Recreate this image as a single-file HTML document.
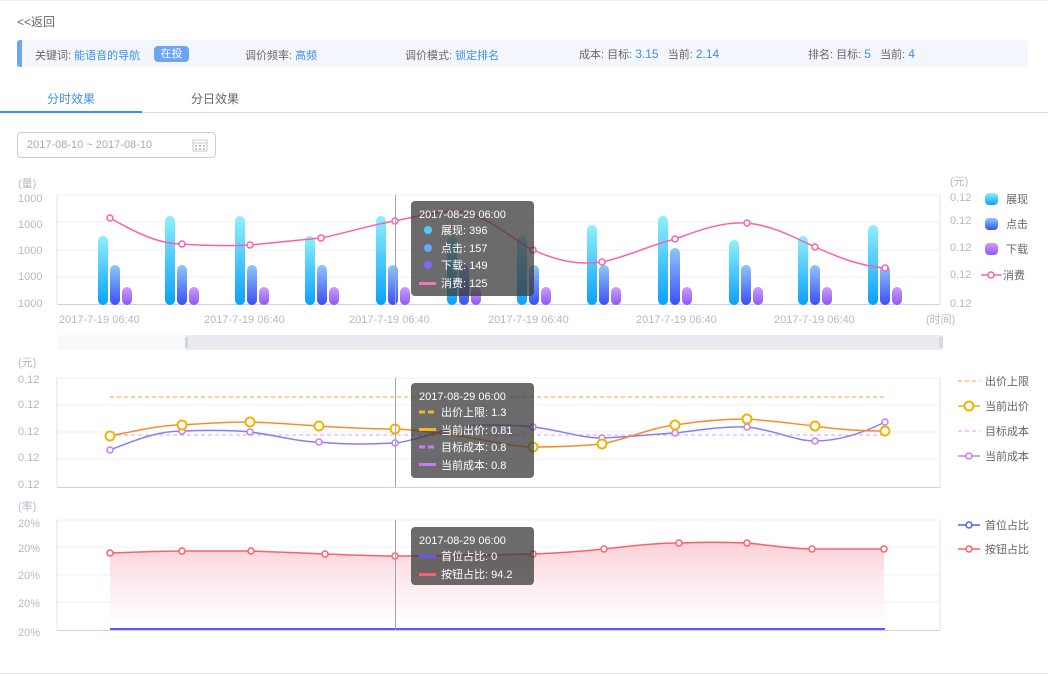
<!DOCTYPE html>
<html><head><meta charset="utf-8"><style>
*{margin:0;padding:0;box-sizing:border-box}
body{width:1048px;height:675px;background:#fff;font-family:"Liberation Sans","Noto Sans CJK SC",sans-serif;overflow:hidden;position:relative}
.a{position:absolute;white-space:pre}
.v{color:#3d8ef5;font-size:12px}
</style></head><body>
<div class="a" style="left:0;top:0;width:1048px;height:1px;background:#eceef3"></div>
<div class="a" style="left:17px;top:13px;font-size:12px;color:#666">&lt;&lt;返回</div>
<div class="a" style="left:17px;top:40px;width:1011px;height:27px;background:#f3f7fd;border-radius:3px;border-left:5px solid #6aa6f5"></div>
<div class="a" style="left:35px;top:47px;font-size:11px;color:#666">关键词: <span style="color:#3d8ef5">能语音的导航</span></div>
<div class="a" style="left:154px;top:46px;width:35px;height:16px;background:#6aa6f5;border-radius:4px;color:#fff;font-size:11px;text-align:center;line-height:16px">在投</div>
<div class="a" style="left:245px;top:47px;font-size:11px;color:#666">调价频率: <span style="color:#3d8ef5">高频</span></div>
<div class="a" style="left:405px;top:47px;font-size:11px;color:#666">调价模式: <span style="color:#3d8ef5">锁定排名</span></div>
<div class="a" style="left:579px;top:46px;font-size:11px;color:#666">成本: 目标: <span class="v">3.15</span>   当前: <span class="v">2.14</span></div>
<div class="a" style="left:808px;top:46px;font-size:11px;color:#666">排名: 目标: <span class="v">5</span>   当前: <span class="v">4</span></div>
<div class="a" style="left:47px;top:90px;font-size:12px;color:#3d8ef5">分时效果</div>
<div class="a" style="left:191px;top:90px;font-size:12px;color:#666">分日效果</div>
<div class="a" style="left:0;top:112px;width:1048px;height:1px;background:#d8dde8"></div>
<div class="a" style="left:0;top:111px;width:142px;height:2px;background:#3d8ef5"></div>
<div class="a" style="left:17px;top:132px;width:199px;height:26px;border:1px solid #c8ccd6;border-radius:4px;font-size:11px;color:#aaa;padding:6px 0 0 9px">2017-08-10 ~ 2017-08-10</div>
<svg class="a" style="left:192px;top:138px" width="16" height="14"><rect x="1" y="2" width="14" height="11" fill="none" stroke="#c5c8d0"/><line x1="1" y1="5" x2="15" y2="5" stroke="#c5c8d0"/><g fill="#c5c8d0"><rect x="3" y="7" width="2" height="2"/><rect x="7" y="7" width="2" height="2"/><rect x="11" y="7" width="2" height="2"/><rect x="3" y="10" width="2" height="2"/><rect x="7" y="10" width="2" height="2"/><rect x="11" y="10" width="2" height="2"/></g></svg>

<svg class="a" style="left:0;top:0" width="1048" height="675" font-family="Liberation Sans, Noto Sans CJK SC, sans-serif" font-size="11" xml:space="preserve">
<defs>
<linearGradient id="gc" x1="0" y1="0" x2="0" y2="1"><stop offset="0" stop-color="#8ef0fc"/><stop offset="1" stop-color="#0aa0fb"/></linearGradient>
<linearGradient id="gb" x1="0" y1="0" x2="0" y2="1"><stop offset="0" stop-color="#8ec6fc"/><stop offset="1" stop-color="#3d4ff5"/></linearGradient>
<linearGradient id="gp" x1="0" y1="0" x2="0" y2="1"><stop offset="0" stop-color="#d29bfb"/><stop offset="1" stop-color="#8a5af5"/></linearGradient>
<linearGradient id="ga" x1="0" y1="0" x2="0" y2="1"><stop offset="0" stop-color="#fbd0d8"/><stop offset="1" stop-color="#fff" stop-opacity="0.6"/></linearGradient>
</defs>
<g fill="#b5b9c6">
<text x="18" y="187">(量)</text>
<text x="18" y="202">1000</text><text x="18" y="228">1000</text><text x="18" y="254">1000</text><text x="18" y="280">1000</text><text x="18" y="307">1000</text>
<text x="950" y="185">(元)</text>
<text x="950" y="201">0.12</text><text x="950" y="224">0.12</text><text x="950" y="251">0.12</text><text x="950" y="278">0.12</text><text x="950" y="307">0.12</text>
<text x="59" y="323">2017-7-19  06:40</text><text x="204" y="323">2017-7-19  06:40</text><text x="349" y="323">2017-7-19  06:40</text><text x="488" y="323">2017-7-19  06:40</text><text x="636" y="323">2017-7-19  06:40</text><text x="774" y="323">2017-7-19  06:40</text>
<text x="926" y="323">(时间)</text>
</g>
<g stroke="#eef0f5"><line x1="57" y1="195" x2="940" y2="195"/><line x1="57" y1="222" x2="940" y2="222"/><line x1="57" y1="250" x2="940" y2="250"/><line x1="57" y1="277" x2="940" y2="277"/></g>
<line x1="57" y1="195" x2="57" y2="304" stroke="#dde0ea"/><line x1="940" y1="195" x2="940" y2="304" stroke="#dde0ea"/>
<line x1="57" y1="304.5" x2="940" y2="304.5" stroke="#cfd3de"/>
<g>
<rect x="98" y="236" width="10" height="69" rx="5" fill="url(#gc)"/><rect x="110" y="265" width="10" height="40" rx="5" fill="url(#gb)"/><rect x="122" y="287" width="10" height="18" rx="5" fill="url(#gp)"/>
<rect x="165" y="216" width="10" height="89" rx="5" fill="url(#gc)"/><rect x="177" y="265" width="10" height="40" rx="5" fill="url(#gb)"/><rect x="189" y="287" width="10" height="18" rx="5" fill="url(#gp)"/>
<rect x="235" y="216" width="10" height="89" rx="5" fill="url(#gc)"/><rect x="247" y="265" width="10" height="40" rx="5" fill="url(#gb)"/><rect x="259" y="287" width="10" height="18" rx="5" fill="url(#gp)"/>
<rect x="305" y="236" width="10" height="69" rx="5" fill="url(#gc)"/><rect x="317" y="265" width="10" height="40" rx="5" fill="url(#gb)"/><rect x="329" y="287" width="10" height="18" rx="5" fill="url(#gp)"/>
<rect x="376" y="216" width="10" height="89" rx="5" fill="url(#gc)"/><rect x="388" y="265" width="10" height="40" rx="5" fill="url(#gb)"/><rect x="400" y="287" width="10" height="18" rx="5" fill="url(#gp)"/>
<rect x="447" y="236" width="10" height="69" rx="5" fill="url(#gc)"/><rect x="459" y="265" width="10" height="40" rx="5" fill="url(#gb)"/><rect x="471" y="287" width="10" height="18" rx="5" fill="url(#gp)"/>
<rect x="517" y="236" width="10" height="69" rx="5" fill="url(#gc)"/><rect x="529" y="265" width="10" height="40" rx="5" fill="url(#gb)"/><rect x="541" y="287" width="10" height="18" rx="5" fill="url(#gp)"/>
<rect x="587" y="225" width="10" height="80" rx="5" fill="url(#gc)"/><rect x="599" y="265" width="10" height="40" rx="5" fill="url(#gb)"/><rect x="611" y="287" width="10" height="18" rx="5" fill="url(#gp)"/>
<rect x="658" y="216" width="10" height="89" rx="5" fill="url(#gc)"/><rect x="670" y="248" width="10" height="57" rx="5" fill="url(#gb)"/><rect x="682" y="287" width="10" height="18" rx="5" fill="url(#gp)"/>
<rect x="729" y="240" width="10" height="65" rx="5" fill="url(#gc)"/><rect x="741" y="265" width="10" height="40" rx="5" fill="url(#gb)"/><rect x="753" y="287" width="10" height="18" rx="5" fill="url(#gp)"/>
<rect x="798" y="236" width="10" height="69" rx="5" fill="url(#gc)"/><rect x="810" y="265" width="10" height="40" rx="5" fill="url(#gb)"/><rect x="822" y="287" width="10" height="18" rx="5" fill="url(#gp)"/>
<rect x="868" y="225" width="10" height="80" rx="5" fill="url(#gc)"/><rect x="880" y="265" width="10" height="40" rx="5" fill="url(#gb)"/><rect x="892" y="287" width="10" height="18" rx="5" fill="url(#gp)"/>
</g>
<path d="M110,218 C140,235 160,244 182,244 C210,246 230,246 250,245 C280,242 300,240 321,238 C350,232 370,225 395,221 C420,216 445,208 466,213 C495,220 515,242 533,250 C560,262 580,265 602,262 C630,256 650,245 675,239 C700,230 720,222 747,223 C775,226 795,238 815,247 C840,258 860,266 885,268" fill="none" stroke="#ff5fa8" stroke-width="1.5"/>
<g fill="#fff" stroke="#ff5fa8" stroke-width="1.5"><circle cx="110" cy="218" r="3"/><circle cx="182" cy="244" r="3"/><circle cx="250" cy="245" r="3"/><circle cx="321" cy="238" r="3"/><circle cx="395" cy="221" r="3"/><circle cx="533" cy="250" r="3"/><circle cx="602" cy="262" r="3"/><circle cx="675" cy="239" r="3"/><circle cx="747" cy="223" r="3"/><circle cx="815" cy="247" r="3"/><circle cx="885" cy="268" r="3"/></g>
<line x1="395.5" y1="195" x2="395.5" y2="304" stroke="#9ea4b8"/>
<rect x="985" y="193" width="13" height="12" rx="4" fill="url(#gc)"/><text x="1006" y="203" fill="#666">展现</text>
<rect x="985" y="218" width="13" height="12" rx="4" fill="url(#gb)"/><text x="1006" y="228" fill="#666">点击</text>
<rect x="985" y="243" width="13" height="12" rx="4" fill="url(#gp)"/><text x="1006" y="253" fill="#666">下载</text>
<line x1="981" y1="275" x2="1002" y2="275" stroke="#ff5fa8" stroke-width="1.5"/><circle cx="991" cy="275" r="3" fill="#fff" stroke="#ff5fa8" stroke-width="1.5"/><text x="1003" y="279" fill="#666">消费</text>
<rect x="57" y="335" width="886" height="15" fill="#e8ebf0" rx="2"/>
<rect x="57" y="335" width="129" height="15" fill="#f8f9fb"/>
<rect x="185" y="337" width="3" height="11" fill="#d0d4dc" rx="1"/>
<rect x="939" y="337" width="4" height="11" fill="#d8dbe2"/>
<rect x="411" y="201" width="123" height="95" rx="4" fill="#3a3a3a" fill-opacity="0.75"/>
<g fill="#fff" font-size="11"><text x="419" y="218">2017-08-29  06:00</text>
<circle cx="428" cy="230" r="4" fill="#52c8fb"/><text x="441" y="234">展现: 396</text>
<circle cx="428" cy="248" r="4" fill="#66a8fb"/><text x="441" y="252">点击: 157</text>
<circle cx="428" cy="265" r="4" fill="#7b6cf8"/><text x="441" y="269">下载: 149</text>
<rect x="419" y="282" width="17" height="3" fill="#ff6fb8"/><text x="441" y="287">消费: 125</text></g>

<g fill="#b5b9c6"><text x="18" y="366">(元)</text>
<text x="18" y="383">0.12</text><text x="18" y="408">0.12</text><text x="18" y="435">0.12</text><text x="18" y="461">0.12</text><text x="18" y="488">0.12</text></g>
<g stroke="#eef0f5"><line x1="57" y1="378" x2="940" y2="378"/><line x1="57" y1="405" x2="940" y2="405"/><line x1="57" y1="432" x2="940" y2="432"/><line x1="57" y1="459" x2="940" y2="459"/></g>
<line x1="57" y1="378" x2="57" y2="487" stroke="#dde0ea"/><line x1="940" y1="378" x2="940" y2="487" stroke="#dde0ea"/>
<line x1="57" y1="487.5" x2="940" y2="487.5" stroke="#cfd3de"/>
<line x1="110" y1="397" x2="885" y2="397" stroke="#f5a623" stroke-dasharray="4,3"/>
<line x1="110" y1="435" x2="885" y2="435" stroke="#d99bff" stroke-dasharray="4,3"/>
<path d="M110,450 C140,438 160,431 182,431 C210,430 230,430 250,432 C280,436 300,442 319,442 C350,445 370,444 395,443 C420,440 445,428 466,426 C495,424 515,425 533,427 C560,430 580,438 602,438 C630,437 655,434 675,433 C700,430 725,426 747,427 C775,430 795,441 815,441 C840,441 865,432 885,422" fill="none" stroke="#8a7cf8" stroke-width="1.5"/>
<path d="M110,436 C140,430 160,425 182,425 C210,423 230,422 250,422 C280,423 300,425 319,426 C350,428 370,429 395,429 C420,430 445,434 466,437 C495,442 515,447 533,447 C560,447 580,446 602,444 C630,438 650,428 675,425 C700,421 725,419 747,419 C775,421 795,424 815,426 C840,430 865,431 885,431" fill="none" stroke="#f78c2a" stroke-width="1.5"/>
<g fill="#fff" stroke="#c77cf5" stroke-width="1.5"><circle cx="110" cy="450" r="3"/><circle cx="182" cy="431" r="3"/><circle cx="250" cy="432" r="3"/><circle cx="319" cy="442" r="3"/><circle cx="395" cy="443" r="3"/><circle cx="533" cy="427" r="3"/><circle cx="602" cy="438" r="3"/><circle cx="675" cy="433" r="3"/><circle cx="747" cy="427" r="3"/><circle cx="815" cy="441" r="3"/><circle cx="885" cy="422" r="3"/></g>
<g fill="#fff" stroke="#f0b400" stroke-width="2"><circle cx="110" cy="436" r="4.5"/><circle cx="182" cy="425" r="4.5"/><circle cx="250" cy="422" r="4.5"/><circle cx="319" cy="426" r="4.5"/><circle cx="395" cy="429" r="4.5"/><circle cx="533" cy="447" r="4.5"/><circle cx="602" cy="444" r="4.5"/><circle cx="675" cy="425" r="4.5"/><circle cx="747" cy="419" r="4.5"/><circle cx="815" cy="426" r="4.5"/><circle cx="885" cy="431" r="4.5"/></g>
<line x1="395.5" y1="378" x2="395.5" y2="487" stroke="#9ea4b8"/>
<g fill="#666"><line x1="958" y1="381" x2="980" y2="381" stroke="#f5a623" stroke-dasharray="4,3"/><text x="985" y="385">出价上限</text>
<line x1="958" y1="406" x2="980" y2="406" stroke="#f0b400" stroke-width="1.5"/><circle cx="969" cy="406" r="4.5" fill="#fff" stroke="#f0b400" stroke-width="2"/><text x="985" y="410">当前出价</text>
<line x1="958" y1="431" x2="980" y2="431" stroke="#d99bff" stroke-dasharray="4,3"/><text x="985" y="435">目标成本</text>
<line x1="958" y1="456" x2="980" y2="456" stroke="#c77cf5" stroke-width="1.5"/><circle cx="969" cy="456" r="3" fill="#fff" stroke="#c77cf5" stroke-width="1.5"/><text x="985" y="460">当前成本</text></g>
<rect x="411" y="383" width="123" height="95" rx="4" fill="#3a3a3a" fill-opacity="0.75"/>
<g fill="#fff"><text x="419" y="400">2017-08-29  06:00</text>
<line x1="419" y1="412" x2="436" y2="412" stroke="#f5b81c" stroke-width="3" stroke-dasharray="6,3"/><text x="441" y="416">出价上限: 1.3</text>
<rect x="419" y="428" width="17" height="3" fill="#f5b81c"/><text x="441" y="434">当前出价: 0.81</text>
<line x1="419" y1="447" x2="436" y2="447" stroke="#c77cf5" stroke-width="3" stroke-dasharray="6,3"/><text x="441" y="451">目标成本: 0.8</text>
<rect x="419" y="463" width="17" height="3" fill="#c77cf5"/><text x="441" y="469">当前成本: 0.8</text></g>

<g fill="#b5b9c6"><text x="18" y="510">(率)</text>
<text x="18" y="527">20%</text><text x="18" y="552">20%</text><text x="18" y="579">20%</text><text x="18" y="607">20%</text><text x="18" y="636">20%</text></g>
<g stroke="#eef0f5"><line x1="57" y1="520" x2="940" y2="520"/><line x1="57" y1="547" x2="940" y2="547"/><line x1="57" y1="575" x2="940" y2="575"/><line x1="57" y1="602" x2="940" y2="602"/></g>
<line x1="57" y1="520" x2="57" y2="630" stroke="#dde0ea"/><line x1="940" y1="520" x2="940" y2="630" stroke="#dde0ea"/>
<line x1="57" y1="630.5" x2="940" y2="630.5" stroke="#cfd3de"/>
<path d="M110,553 C140,552 160,551 182,551 C210,551 230,551 251,551 C280,552 300,553 325,554 C350,555 370,556 395,556 C440,556 490,555 533,554 C560,553 585,551 604,549 C630,546 655,543 679,543 C700,542 725,542 747,543 C770,545 790,549 812,549 C840,549 860,549 884,549 L884,630 L110,630Z" fill="url(#ga)"/>
<path d="M110,553 C140,552 160,551 182,551 C210,551 230,551 251,551 C280,552 300,553 325,554 C350,555 370,556 395,556 C440,556 490,555 533,554 C560,553 585,551 604,549 C630,546 655,543 679,543 C700,542 725,542 747,543 C770,545 790,549 812,549 C840,549 860,549 884,549" fill="none" stroke="#ff5f6d" stroke-width="1.5"/>
<g fill="#fff" stroke="#ff5f6d" stroke-width="1.5"><circle cx="110" cy="553" r="3"/><circle cx="182" cy="551" r="3"/><circle cx="251" cy="551" r="3"/><circle cx="325" cy="554" r="3"/><circle cx="395" cy="556" r="3"/><circle cx="533" cy="554" r="3"/><circle cx="604" cy="549" r="3"/><circle cx="679" cy="543" r="3"/><circle cx="747" cy="543" r="3"/><circle cx="812" cy="549" r="3"/><circle cx="884" cy="549" r="3"/></g>
<line x1="110" y1="629" x2="885" y2="629" stroke="#5a5cf5" stroke-width="2"/>
<line x1="395.5" y1="520" x2="395.5" y2="630" stroke="#9ea4b8"/>
<g fill="#666"><line x1="958" y1="525" x2="980" y2="525" stroke="#5a5cf5" stroke-width="1.5"/><circle cx="969" cy="525" r="3" fill="#fff" stroke="#5a5cf5" stroke-width="1.5"/><text x="985" y="529">首位占比</text>
<line x1="958" y1="549" x2="980" y2="549" stroke="#ff5f6d" stroke-width="1.5"/><circle cx="969" cy="549" r="3" fill="#fff" stroke="#ff5f6d" stroke-width="1.5"/><text x="985" y="553">按钮占比</text></g>
<rect x="411" y="527" width="123" height="58" rx="4" fill="#3a3a3a" fill-opacity="0.75"/>
<g fill="#fff"><text x="419" y="544">2017-08-29  06:00</text>
<rect x="419" y="555" width="17" height="3" fill="#5a5cf5"/><text x="441" y="560">首位占比: 0</text>
<rect x="419" y="573" width="17" height="3" fill="#ff5f6d"/><text x="441" y="578">按钮占比: 94.2</text></g>
<line x1="0" y1="673.5" x2="1048" y2="673.5" stroke="#e4e6ec"/>
</svg>
</body></html>
